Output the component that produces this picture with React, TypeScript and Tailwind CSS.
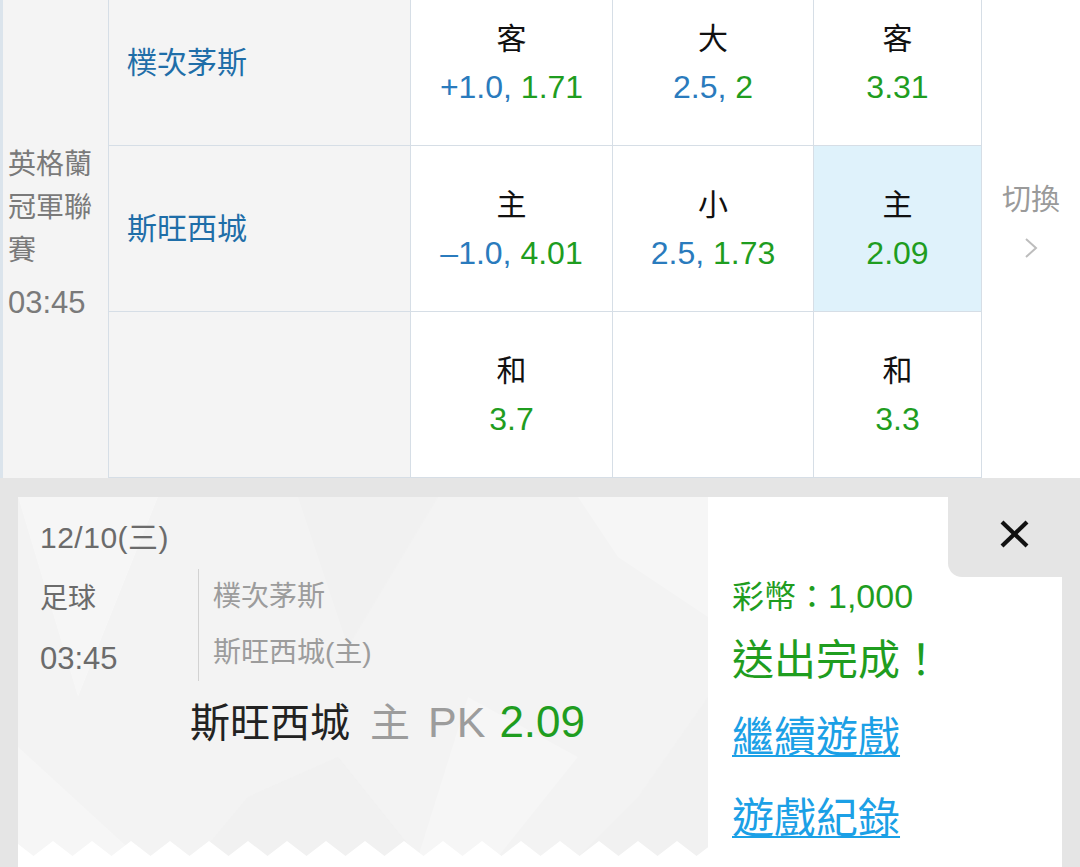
import React from "react";

const ODDS_BLUE = "text-[#2a7bbd]";
const ODDS_GREEN = "text-[#1f9d1f]";

function OddsCell({
  label,
  handicap,
  odds,
  highlight,
}: {
  label?: string;
  handicap?: string;
  odds?: string;
  highlight?: boolean;
}) {
  return (
    <div
      className={
        highlight
          ? "flex flex-col items-center justify-center border-r border-b border-[#d6dee6] bg-[#dff2fb]"
          : "flex flex-col items-center justify-center border-r border-b border-[#d6dee6] bg-white"
      }
    >
      {label ? (
        <>
          <div className="text-[30px] leading-[48px] text-[#111]">{label}</div>
          <div className="text-[32px] leading-[48px] whitespace-nowrap">
            {handicap ? <span className={ODDS_BLUE}>{handicap}, </span> : null}
            <span className={ODDS_GREEN}>{odds}</span>
          </div>
        </>
      ) : null}
    </div>
  );
}

function TeamCell({ name }: { name?: string }) {
  return (
    <div className="flex items-center border-r border-b border-[#d6dee6] bg-[#f4f4f4] pl-[18px] text-[30px] text-[#1f6ea8]">
      {name}
    </div>
  );
}

function Zigzag() {
  const pts: string[] = ["0,15"];
  for (let k = -1; k < 19; k++) {
    pts.push(`${15.5 + 39 * k},15`);
    pts.push(`${35 + 39 * k},0`);
  }
  pts.push("700,15");
  return (
    <svg width="690" height="16" viewBox="0 0 690 16" className="block">
      <polygon points={pts.join(" ")} fill="#ffffff" />
      <rect x="0" y="15" width="690" height="1" fill="#ffffff" />
    </svg>
  );
}

function TicketBg() {
  return (
    <svg
      className="absolute inset-0"
      width="690"
      height="360"
      viewBox="0 0 690 360"
    >
      <polygon points="0,0 140,0 60,200" fill="#ffffff" opacity="0.3" />
      <polygon points="280,0 420,0 330,150" fill="#efefef" opacity="0.5" />
      <polygon points="560,0 690,0 690,120 600,60" fill="#ffffff" opacity="0.25" />
      <polygon points="620,300 690,200 690,360 560,360" fill="#f0f0f0" opacity="0.5" />
      <polygon points="230,300 320,260 400,360 180,360" fill="#efefef" opacity="0.5" />
      <polygon points="0,250 120,360 0,360" fill="#ffffff" opacity="0.3" />
      <polygon points="450,200 560,260 480,360 400,360" fill="#ffffff" opacity="0.25" />
    </svg>
  );
}

export default function App() {
  return (
    <div className="w-[1080px] h-[867px] overflow-hidden bg-white font-['Liberation_Sans','Noto_Sans_CJK_TC',sans-serif]">
      {/* odds table */}
      <div className="h-[478px] overflow-hidden">
        <div className="-mt-[20px] grid grid-cols-[109px_302px_202px_201px_168px_98px] grid-rows-[166px_166px_166px]">
          <div className="row-span-3 border-l-[3px] border-l-[#dbe4ec] border-r border-r-[#d6dee6] bg-[#f4f4f4] pl-[5px] pt-[163px] text-[#7a7a7a]">
            <div className="text-[28px] leading-[43px]">英格蘭</div>
            <div className="text-[28px] leading-[43px]">冠軍聯</div>
            <div className="text-[28px] leading-[43px]">賽</div>
            <div className="mt-[9px] text-[31px] leading-[43px]">03:45</div>
          </div>

          <TeamCell name="樸次茅斯" />
          <OddsCell label="客" handicap="+1.0" odds="1.71" />
          <OddsCell label="大" handicap="2.5" odds="2" />
          <OddsCell label="客" odds="3.31" />

          <div className="row-span-3 flex flex-col items-center bg-white pt-[200px]">
            <div className="text-[29px] leading-[40px] text-[#9a9a9a]">切換</div>
            <svg width="14" height="22" viewBox="0 0 14 22" className="mt-[17px]">
              <polyline
                points="2,2 12,11 2,20"
                fill="none"
                stroke="#bdbdbd"
                strokeWidth="2"
              />
            </svg>
          </div>

          <TeamCell name="斯旺西城" />
          <OddsCell label="主" handicap="–1.0" odds="4.01" />
          <OddsCell label="小" handicap="2.5" odds="1.73" />
          <OddsCell label="主" odds="2.09" highlight />

          <TeamCell />
          <OddsCell label="和" odds="3.7" />
          <OddsCell />
          <OddsCell label="和" odds="3.3" />
        </div>
      </div>

      {/* bet ticket */}
      <div className="h-[389px] overflow-hidden bg-[#e5e5e5] pt-[19px] pl-[18px] pr-[18px]">
        <div className="flex h-[370px]">
          <div className="w-[690px] h-full bg-white overflow-hidden">
            <div className="relative h-[360px] bg-[#f3f3f3]">
              <TicketBg />
              <div className="relative pl-[22px] pt-[21px]">
                <div className="text-[30px] leading-[40px] text-[#6b6b6b] tracking-[0.5px]">12/10(三)</div>
                <div className="mt-[11px] flex">
                  <div className="w-[158px] leading-[60px] text-[#6b6b6b]">
                    <div className="text-[28px]">足球</div>
                    <div className="text-[31px]">03:45</div>
                  </div>
                  <div className="h-[112px] border-l border-[#d2d2d2] pl-[14px] text-[28px] leading-[56px] text-[#9c9c9c]">
                    <div>樸次茅斯</div>
                    <div>斯旺西城(主)</div>
                  </div>
                </div>
                <div className="mt-[8px] flex items-baseline pl-[150px] leading-[50px] whitespace-nowrap">
                  <span className="text-[40px] text-[#222]">斯旺西城</span>
                  <span className="ml-[20px] text-[40px] text-[#9c9c9c]">主</span>
                  <span className="ml-[18px] text-[43px] text-[#9c9c9c]">PK</span>
                  <span className="ml-[14px] text-[44px] text-[#1f9d1f]">2.09</span>
                </div>
              </div>
              <div className="absolute bottom-0 left-0">
                <Zigzag />
              </div>
            </div>
          </div>

          <div className="flex w-[354px] flex-col">
            <div className="flex h-[80px] bg-white">
              <div className="flex-1" />
              <div className="flex w-[114px] items-center rounded-bl-[14px] bg-[#e5e5e5] pl-[52px] pb-[6px]">
                <svg width="29" height="28" viewBox="0 0 29 28">
                  <line x1="2" y1="2" x2="27" y2="26" stroke="#111" strokeWidth="4.2" />
                  <line x1="27" y1="2" x2="2" y2="26" stroke="#111" strokeWidth="4.2" />
                </svg>
              </div>
            </div>
            <div className="flex-1 bg-white pl-[24px] text-[#1f9d1f]">
              <div className="-mt-[1px] flex items-baseline leading-[40px]">
                <span className="text-[32px]">彩幣：</span>
                <span className="text-[34px]">1,000</span>
              </div>
              <div className="mt-[14px] text-[42px] leading-[60px]">送出完成！</div>
              <div className="mt-[19px] text-[42px] leading-[56px] text-[#1ba0e6] underline decoration-2 underline-offset-[3px]">
                繼續遊戲
              </div>
              <div className="mt-[25px] text-[42px] leading-[56px] text-[#1ba0e6] underline decoration-2 underline-offset-[3px]">
                遊戲紀錄
              </div>
            </div>
          </div>
        </div>
      </div>
    </div>
  );
}
